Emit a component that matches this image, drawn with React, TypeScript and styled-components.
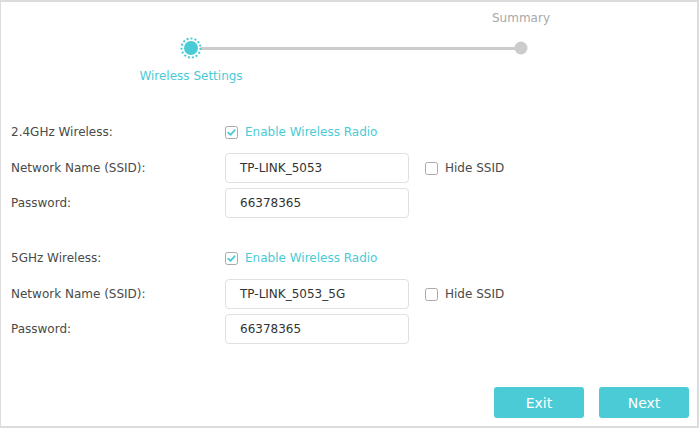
import React from "react";
import styled, { createGlobalStyle } from "styled-components";

const Global = createGlobalStyle`
  html, body { margin: 0; padding: 0; background: #fff; }
  body { font-family: "DejaVu Sans", Verdana, sans-serif; font-size: 12px; color: #4a4a4a; }
  * { box-sizing: border-box; }
`;

const TEAL = "#4acbd6";

const Frame = styled.div`
  width: 699px;
  height: 428px;
  border: 1px solid #dcdcdc;
  border-width: 2px 2px 2px 1px;
  display: flex;
  flex-direction: column;
  padding: 0 0 0 10px;
`;

const Stepper = styled.div`
  display: grid;
  grid-template-columns: 120px 210px 120px;
  grid-template-rows: 30px 30px 26px;
  margin-left: 120px;
  margin-top: 1px;
`;

const StepLabel = styled.div<{ $col: number; $row: number; $active?: boolean }>`
  grid-column: ${(p) => p.$col};
  grid-row: ${(p) => p.$row};
  justify-self: center;
  align-self: center;
  font-size: 12px;
  color: ${(p) => (p.$active ? TEAL : "#a9a9a9")};
  white-space: nowrap;
`;

const Track = styled.div`
  grid-column: 1 / 4;
  grid-row: 2;
  align-self: center;
  height: 3px;
  margin: 0 60px;
  background: #cccccc;
`;

const DotCell = styled.div<{ $col: number }>`
  grid-column: ${(p) => p.$col};
  grid-row: 2;
  justify-self: center;
  align-self: center;
  display: flex;
  z-index: 1;
`;

const Form = styled.div`
  display: flex;
  flex-direction: column;
  margin-top: 31px;
  gap: 28px;
`;

const Section = styled.div`
  display: flex;
  flex-direction: column;
  gap: 5px;
`;

const Row = styled.div<{ $head?: boolean }>`
  display: grid;
  grid-template-columns: 214px 184px auto;
  align-items: center;
  height: ${(p) => (p.$head ? "24px" : "30px")};
  margin-bottom: ${(p) => (p.$head ? "4px" : "0")};
`;

const Label = styled.div`
  color: #4a4a4a;
  white-space: nowrap;
`;

const Input = styled.div`
  height: 30px;
  border: 1px solid #e0e0e0;
  border-radius: 4px;
  display: flex;
  align-items: center;
  padding-left: 14px;
  color: #333;
`;

const Check = styled.label<{ $on?: boolean; $indent?: number }>`
  display: flex;
  align-items: center;
  gap: 7px;
  margin-left: ${(p) => p.$indent ?? 0}px;
  color: ${(p) => (p.$on ? TEAL : "#4a4a4a")};
  white-space: nowrap;
`;

const Footer = styled.div`
  margin-top: auto;
  display: flex;
  justify-content: flex-end;
  gap: 15px;
  padding: 0 8px 8px 0;
`;

const Button = styled.button`
  width: 90px;
  height: 31px;
  border: none;
  border-radius: 3px;
  background: ${TEAL};
  color: #fff;
  font-family: "DejaVu Sans", Verdana, sans-serif;
  font-size: 14px;
  padding: 0;
`;

const Box = ({ on }: { on?: boolean }) => (
  <svg width="13" height="13" viewBox="0 0 13 13">
    <rect x="0.5" y="0.5" width="12" height="12" rx="2" fill="#fff" stroke="#a9a9a9" />
    {on && <path d="M3.2 6.6 L5.5 8.8 L9.8 4.2" fill="none" stroke={TEAL} strokeWidth="1.8" strokeLinecap="round" strokeLinejoin="round" />}
  </svg>
);

const Band = ({ name, ssid }: { name: string; ssid: string }) => (
  <Section>
    <Row $head>
      <Label>{name}</Label>
      <Check $on>
        <Box on />
        Enable Wireless Radio
      </Check>
    </Row>
    <Row>
      <Label>Network Name (SSID):</Label>
      <Input>{ssid}</Input>
      <Check $indent={16}>
        <Box />
        Hide SSID
      </Check>
    </Row>
    <Row>
      <Label>Password:</Label>
      <Input>66378365</Input>
    </Row>
  </Section>
);

export default function App() {
  return (
    <>
      <Global />
      <Frame>
        <Stepper>
          <StepLabel $col={3} $row={1}>Summary</StepLabel>
          <Track />
          <DotCell $col={1}>
            <svg width="22" height="22" viewBox="0 0 22 22">
              <circle cx="11" cy="11" r="9.5" fill="#fff" stroke={TEAL} strokeWidth="2" strokeDasharray="2 2" />
              <circle cx="11" cy="11" r="7" fill={TEAL} />
            </svg>
          </DotCell>
          <DotCell $col={3}>
            <svg width="14" height="14" viewBox="0 0 14 14">
              <circle cx="7" cy="7" r="6.5" fill="#cccccc" />
            </svg>
          </DotCell>
          <StepLabel $col={1} $row={3} $active>Wireless Settings</StepLabel>
        </Stepper>
        <Form>
          <Band name="2.4GHz Wireless:" ssid="TP-LINK_5053" />
          <Band name="5GHz Wireless:" ssid="TP-LINK_5053_5G" />
        </Form>
        <Footer>
          <Button>Exit</Button>
          <Button>Next</Button>
        </Footer>
      </Frame>
    </>
  );
}
